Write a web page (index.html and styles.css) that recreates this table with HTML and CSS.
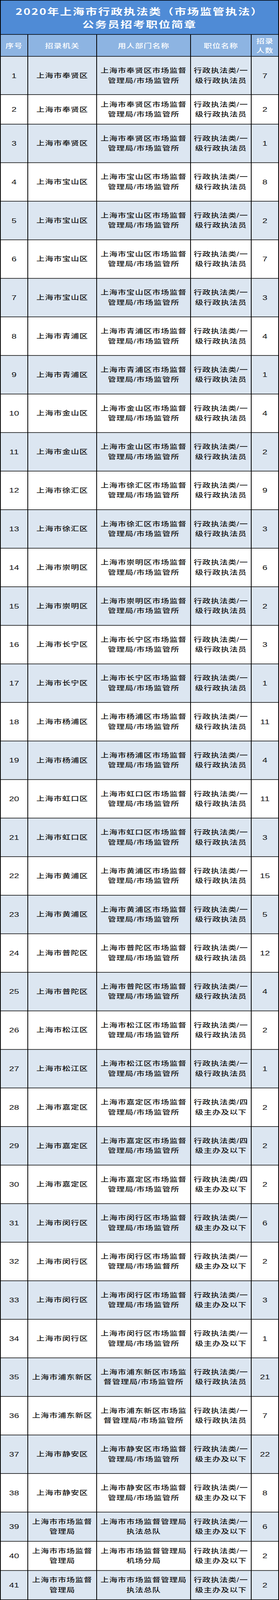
FILE: index.html
```html
<!DOCTYPE html>
<html lang="zh-CN">
<head>
<meta charset="utf-8">
<title>2020年上海市行政执法类（市场监管执法）公务员招考职位简章</title>
<link rel="stylesheet" href="styles.css">
</head>
<body>
<div class="frame">
<div class="sheet">
  <div class="title"><span>2020年上海市行政执法类（市场监管执法）</span><span>公务员招考职位简章</span></div>
  <div class="grid">
    <div class="row head"><div class="cell">序号</div><div class="cell">招录机关</div><div class="cell">用人部门名称</div><div class="cell">职位名称</div><div class="cell cnt-head">招录人数</div></div>
    <div class="row odd first"><div class="cell num">1</div><div class="cell">上海市奉贤区</div><div class="cell">上海市奉贤区市场监督管理局/市场监管所</div><div class="cell">行政执法类/一级行政执法员</div><div class="cell num">7</div></div>
    <div class="row even short2"><div class="cell num">2</div><div class="cell">上海市奉贤区</div><div class="cell">上海市奉贤区市场监督管理局/市场监管所</div><div class="cell">行政执法类/一级行政执法员</div><div class="cell num">2</div></div>
    <div class="row odd"><div class="cell num">3</div><div class="cell">上海市奉贤区</div><div class="cell">上海市奉贤区市场监督管理局/市场监管所</div><div class="cell">行政执法类/一级行政执法员</div><div class="cell num">1</div></div>
    <div class="row even"><div class="cell num">4</div><div class="cell">上海市宝山区</div><div class="cell">上海市宝山区市场监督管理局/市场监管所</div><div class="cell">行政执法类/一级行政执法员</div><div class="cell num">8</div></div>
    <div class="row odd"><div class="cell num">5</div><div class="cell">上海市宝山区</div><div class="cell">上海市宝山区市场监督管理局/市场监管所</div><div class="cell">行政执法类/一级行政执法员</div><div class="cell num">2</div></div>
    <div class="row even"><div class="cell num">6</div><div class="cell">上海市宝山区</div><div class="cell">上海市宝山区市场监督管理局/市场监管所</div><div class="cell">行政执法类/一级行政执法员</div><div class="cell num">7</div></div>
    <div class="row odd"><div class="cell num">7</div><div class="cell">上海市宝山区</div><div class="cell">上海市宝山区市场监督管理局/市场监管所</div><div class="cell">行政执法类/一级行政执法员</div><div class="cell num">3</div></div>
    <div class="row even"><div class="cell num">8</div><div class="cell">上海市青浦区</div><div class="cell">上海市青浦区市场监督管理局/市场监管所</div><div class="cell">行政执法类/一级行政执法员</div><div class="cell num">4</div></div>
    <div class="row odd"><div class="cell num">9</div><div class="cell">上海市青浦区</div><div class="cell">上海市青浦区市场监督管理局/市场监管所</div><div class="cell">行政执法类/一级行政执法员</div><div class="cell num">1</div></div>
    <div class="row even"><div class="cell num">10</div><div class="cell">上海市金山区</div><div class="cell">上海市金山区市场监督管理局/市场监管所</div><div class="cell">行政执法类/一级行政执法员</div><div class="cell num">4</div></div>
    <div class="row odd"><div class="cell num">11</div><div class="cell">上海市金山区</div><div class="cell">上海市金山区市场监督管理局/市场监管所</div><div class="cell">行政执法类/一级行政执法员</div><div class="cell num">2</div></div>
    <div class="row even"><div class="cell num">12</div><div class="cell">上海市徐汇区</div><div class="cell">上海市徐汇区市场监督管理局/市场监管所</div><div class="cell">行政执法类/一级行政执法员</div><div class="cell num">9</div></div>
    <div class="row odd"><div class="cell num">13</div><div class="cell">上海市徐汇区</div><div class="cell">上海市徐汇区市场监督管理局/市场监管所</div><div class="cell">行政执法类/一级行政执法员</div><div class="cell num">3</div></div>
    <div class="row even"><div class="cell num">14</div><div class="cell">上海市崇明区</div><div class="cell">上海市崇明区市场监督管理局/市场监管所</div><div class="cell">行政执法类/一级行政执法员</div><div class="cell num">6</div></div>
    <div class="row odd"><div class="cell num">15</div><div class="cell">上海市崇明区</div><div class="cell">上海市崇明区市场监督管理局/市场监管所</div><div class="cell">行政执法类/一级行政执法员</div><div class="cell num">2</div></div>
    <div class="row even"><div class="cell num">16</div><div class="cell">上海市长宁区</div><div class="cell">上海市长宁区市场监督管理局/市场监管所</div><div class="cell">行政执法类/一级行政执法员</div><div class="cell num">3</div></div>
    <div class="row odd"><div class="cell num">17</div><div class="cell">上海市长宁区</div><div class="cell">上海市长宁区市场监督管理局/市场监管所</div><div class="cell">行政执法类/一级行政执法员</div><div class="cell num">1</div></div>
    <div class="row even"><div class="cell num">18</div><div class="cell">上海市杨浦区</div><div class="cell">上海市杨浦区市场监督管理局/市场监管所</div><div class="cell">行政执法类/一级行政执法员</div><div class="cell num">11</div></div>
    <div class="row odd"><div class="cell num">19</div><div class="cell">上海市杨浦区</div><div class="cell">上海市杨浦区市场监督管理局/市场监管所</div><div class="cell">行政执法类/一级行政执法员</div><div class="cell num">4</div></div>
    <div class="row even"><div class="cell num">20</div><div class="cell">上海市虹口区</div><div class="cell">上海市虹口区市场监督管理局/市场监管所</div><div class="cell">行政执法类/一级行政执法员</div><div class="cell num">11</div></div>
    <div class="row odd"><div class="cell num">21</div><div class="cell">上海市虹口区</div><div class="cell">上海市虹口区市场监督管理局/市场监管所</div><div class="cell">行政执法类/一级行政执法员</div><div class="cell num">3</div></div>
    <div class="row even"><div class="cell num">22</div><div class="cell">上海市黄浦区</div><div class="cell">上海市黄浦区市场监督管理局/市场监管所</div><div class="cell">行政执法类/一级行政执法员</div><div class="cell num">15</div></div>
    <div class="row odd"><div class="cell num">23</div><div class="cell">上海市黄浦区</div><div class="cell">上海市黄浦区市场监督管理局/市场监管所</div><div class="cell">行政执法类/一级行政执法员</div><div class="cell num">5</div></div>
    <div class="row even"><div class="cell num">24</div><div class="cell">上海市普陀区</div><div class="cell">上海市普陀区市场监督管理局/市场监管所</div><div class="cell">行政执法类/一级行政执法员</div><div class="cell num">12</div></div>
    <div class="row odd"><div class="cell num">25</div><div class="cell">上海市普陀区</div><div class="cell">上海市普陀区市场监督管理局/市场监管所</div><div class="cell">行政执法类/一级行政执法员</div><div class="cell num">4</div></div>
    <div class="row even"><div class="cell num">26</div><div class="cell">上海市松江区</div><div class="cell">上海市松江区市场监督管理局/市场监管所</div><div class="cell">行政执法类/一级行政执法员</div><div class="cell num">2</div></div>
    <div class="row odd"><div class="cell num">27</div><div class="cell">上海市松江区</div><div class="cell">上海市松江区市场监督管理局/市场监管所</div><div class="cell">行政执法类/一级行政执法员</div><div class="cell num">1</div></div>
    <div class="row even"><div class="cell num">28</div><div class="cell">上海市嘉定区</div><div class="cell">上海市嘉定区市场监督管理局/市场监管所</div><div class="cell">行政执法类/四级主办及以下</div><div class="cell num">2</div></div>
    <div class="row odd"><div class="cell num">29</div><div class="cell">上海市嘉定区</div><div class="cell">上海市嘉定区市场监督管理局/市场监管所</div><div class="cell">行政执法类/四级主办及以下</div><div class="cell num">2</div></div>
    <div class="row even"><div class="cell num">30</div><div class="cell">上海市嘉定区</div><div class="cell">上海市嘉定区市场监督管理局/市场监管所</div><div class="cell">行政执法类/四级主办及以下</div><div class="cell num">2</div></div>
    <div class="row odd"><div class="cell num">31</div><div class="cell">上海市闵行区</div><div class="cell">上海市闵行区市场监督管理局/市场监管所</div><div class="cell">行政执法类/一级主办及以下</div><div class="cell num">6</div></div>
    <div class="row even"><div class="cell num">32</div><div class="cell">上海市闵行区</div><div class="cell">上海市闵行区市场监督管理局/市场监督所</div><div class="cell">行政执法类/一级主办及以下</div><div class="cell num">2</div></div>
    <div class="row odd"><div class="cell num">33</div><div class="cell">上海市闵行区</div><div class="cell">上海市闵行区市场监督管理局/市场监管所</div><div class="cell">行政执法类/一级主办及以下</div><div class="cell num">3</div></div>
    <div class="row even"><div class="cell num">34</div><div class="cell">上海市闵行区</div><div class="cell">上海市闵行区市场监督管理局/市场监管所</div><div class="cell">行政执法类/一级主办及以下</div><div class="cell num">1</div></div>
    <div class="row odd"><div class="cell num">35</div><div class="cell">上海市浦东新区</div><div class="cell">上海市浦东新区市场监督管理局/市场监管所</div><div class="cell">行政执法类/一级行政执法员</div><div class="cell num">21</div></div>
    <div class="row even"><div class="cell num">36</div><div class="cell">上海市浦东新区</div><div class="cell">上海市浦东新区市场监督管理局/市场监管所</div><div class="cell">行政执法类/一级行政执法员</div><div class="cell num">7</div></div>
    <div class="row odd"><div class="cell num">37</div><div class="cell">上海市静安区</div><div class="cell">上海市静安区市场监督管理局/市场监管所</div><div class="cell">行政执法类/一级主办及以下</div><div class="cell num">22</div></div>
    <div class="row even"><div class="cell num">38</div><div class="cell">上海市静安区</div><div class="cell">上海市静安区市场监督管理局/市场监管所</div><div class="cell">行政执法类/一级主办及以下</div><div class="cell num">8</div></div>
    <div class="row odd short"><div class="cell num">39</div><div class="cell">上海市市场监督管理局</div><div class="cell">上海市市场监督管理局执法总队</div><div class="cell">行政执法类/一级主办及以下</div><div class="cell num">6</div></div>
    <div class="row even short"><div class="cell num">40</div><div class="cell">上海市市场监督管理局</div><div class="cell">上海市市场监督管理局机场分局</div><div class="cell">行政执法类/一级主办及以下</div><div class="cell num">2</div></div>
    <div class="row odd short"><div class="cell num">41</div><div class="cell">上海市市场监督管理局</div><div class="cell">上海市市场监督管理局执法总队</div><div class="cell">行政执法类/一级主办及以下</div><div class="cell num">2</div></div>
  </div>
</div>
</div>
</body>
</html>
```

FILE: styles.css
```css
html, body {
  margin: 0;
  padding: 0;
  background: #ffffff;
}

body {
  font-family: "Liberation Sans", "Noto Sans CJK SC", sans-serif;
  color: #111111;
}

/* The capture window is 4096px tall: the 5478px sheet is fitted into it vertically. */
.frame {
  width: 713px;
  height: 4096px;
  overflow: hidden;
}

.sheet {
  width: 713px;
  box-sizing: border-box;
  border: 2px solid #000000;
  background: #000000;
  display: flex;
  flex-direction: column;
  gap: 2px;
  transform: scaleY(0.74772);
  transform-origin: 0 0;
}

.title {
  height: 115px;
  background: #4f8bd6;
  color: #ffffff;
  font-family: "Noto Sans CJK SC", sans-serif;
  font-weight: 700;
  font-size: 30px;
  letter-spacing: 2.5px;
  line-height: 44px;
  display: flex;
  flex-direction: column;
  align-items: center;
  justify-content: center;
  overflow: hidden;
}

.grid {
  display: grid;
  grid-template-columns: 68px 174px 238px 153px 68px;
  gap: 2px;
}

.row {
  display: contents;
}

.cell {
  box-sizing: border-box;
  height: 130px;
  padding: 0 3px;
  display: flex;
  align-items: center;
  justify-content: center;
  text-align: center;
  font-size: 21px;
  letter-spacing: 1px;
  line-height: 34px;
  font-weight: 500;
  overflow: hidden;
}

.row.head .cell {
  height: 73px;
  background: #8db4e2;
  color: #ffffff;
  font-family: "Noto Sans CJK SC", sans-serif;
  line-height: 32px;
}

.row.head .cnt-head {
  padding: 0 8px;
}

.row.first .cell {
  height: 129px;
}

.row.short2 .cell {
  height: 99px;
}

.row.short .cell {
  height: 98px;
}

.row.odd .cell {
  background: #dce6f1;
}

.row.even .cell {
  background: #ffffff;
}

.cell.num {
  font-size: 23px;
  letter-spacing: 0;
  font-weight: 400;
}
```
